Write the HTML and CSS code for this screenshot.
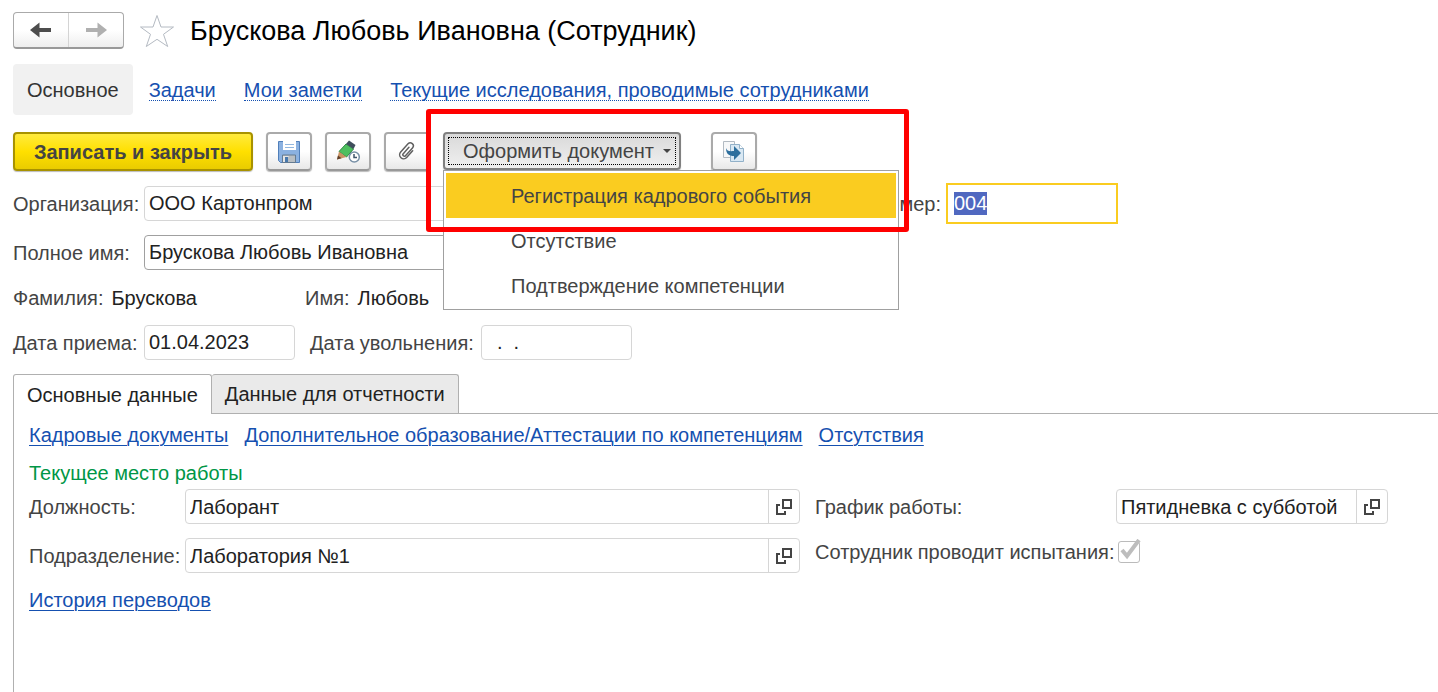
FILE: index.html
```html
<!DOCTYPE html>
<html lang="ru">
<head>
<meta charset="utf-8">
<title>Брускова Любовь Ивановна (Сотрудник)</title>
<link rel="stylesheet" href="styles.css">
</head>
<body>
<svg class="sprite" aria-hidden="true">
  <symbol id="open" viewBox="0 0 16 16"><path d="M7 1h8v8H7z M4 6H1v9h8v-3" fill="none" stroke="#444" stroke-width="2"/></symbol>
</svg>
<main class="page">
  <header class="header">
    <div class="history">
      <button class="history-btn" type="button" aria-label="Назад"><svg width="22" height="16" viewBox="0 0 22 16"><path d="M0 8 9.500 .5V6H21v4H9.500v5.500z" fill="#4d4d4d"/></svg></button>
      <button class="history-btn" type="button" aria-label="Вперед"><svg width="22" height="16" viewBox="0 0 22 16"><path d="M22 8 12.500 .5V6H1v4h11.500v5.500z" fill="#b0b0b0"/></svg></button>
    </div>
    <button class="star" type="button" aria-label="В избранное"><svg width="36" height="34" viewBox="0 0 36 34"><path d="M18 1.500 22 13h12.500l-10 7.300L28.700 32.500 18 25.300 7.300 32.500l4.200-12.200L1.500 13H14z" fill="none" stroke="#b4bac2"/></svg></button>
    <h1 class="title">Брускова Любовь Ивановна (Сотрудник)</h1>
  </header>

  <nav class="nav">
    <a class="nav-current" href="#main">Основное</a>
    <a class="nav-link" href="#tasks">Задачи</a>
    <a class="nav-link" href="#notes">Мои заметки</a>
    <a class="nav-link" href="#research">Текущие исследования, проводимые сотрудниками</a>
  </nav>

  <div class="toolbar">
    <button class="btn btn-primary" type="button">Записать и закрыть</button>
    <button class="btn btn-icon" type="button" aria-label="Записать"><svg width="24" height="24" viewBox="0 0 24 24"><path d="M1.500 1.500h21v21h-19l-2-2z" fill="#8bb1e0" stroke="#507fba"/><path d="M6 1h13v9H6z" fill="#fff"/><path d="M8 4.500h9M8 7.500h9" stroke="#92b7df"/><path d="M5.500 15h13v7.500h-13z" fill="#b8bec3" stroke="#647b91"/><path d="M6 16h6l-4 6H6z" fill="#e5e5e5"/><path d="M8 17h3v5H8z" fill="#4878ac"/></svg></button>
    <button class="btn btn-icon" type="button" aria-label="Отложенная запись"><svg width="24" height="24" viewBox="0 0 24 24"><path d="M10 4l7.500 5-7 8L3 11.500z" fill="#4fbf60" stroke="#2d8c42"/><path d="M13 .5 19.500 5l-2 4L10 4z" fill="#3f4e5c"/><path d="M3 11.500l7.500 5.500L1 19.500z" fill="#c99465"/><path d="M2 15.500 1 19.500l4.500-1.200z" fill="#5f3f2a"/><circle cx="18.300" cy="17" r="5" fill="#fff" stroke="#7890a6" stroke-width="1.500"/><path d="M18 14v3.500h3" fill="none" stroke="#40566b" stroke-width="1.500"/></svg></button>
    <button class="btn btn-icon" type="button" aria-label="Присоединенные файлы"><svg width="22" height="22" viewBox="0 0 22 22"><path d="M15 6v9a4 4 0 0 1-8 0V4a3 3 0 0 1 6 0v10.500a1.200 1.200 0 0 1-3 0V6" transform="rotate(42 11 10)" fill="none" stroke="#606060" stroke-width="1.500" stroke-linecap="round"/></svg></button>
    <div class="dropdown">
      <button class="btn btn-open" type="button" aria-haspopup="menu" aria-expanded="true"><span class="btn-open-text">Оформить документ<span class="caret"></span></span></button>
      <div class="menu" role="menu">
        <button class="menu-item menu-item-active" type="button" role="menuitem">Регистрация кадрового события</button>
        <button class="menu-item" type="button" role="menuitem">Отсутствие</button>
        <button class="menu-item" type="button" role="menuitem">Подтверждение компетенции</button>
      </div>
      <div class="highlight"></div>
    </div>
    <button class="btn btn-icon btn-related" type="button" aria-label="Создать на основании"><svg width="24" height="24" viewBox="0 0 24 24"><path d="M1.500 1.500h11v16h-11z" fill="#f7f8f9" stroke="#b2bac2"/><path d="M8.500 4.500h9l4 4v13h-13z" fill="#d9e8f3" stroke="#91b0c8"/><path d="M17.500 4.500v4h4" fill="#fff" stroke="#91b0c8"/><path d="M4 8c1 3 3 3.500 8 3V6l7 7-7 7v-4c-5 0-8-2-8-8z" fill="#2c6e9d"/></svg></button>
  </div>

  <form class="form">
    <div class="row row-org">
      <label class="label" for="org">Организация:</label>
      <input class="input input-long" id="org" value="ООО Картонпром" readonly>
      <label class="label-number" for="number">Номер:</label>
      <input class="input input-number" id="number" value="004">
    </div>
    <div class="row row-name">
      <label class="label" for="name">Полное имя:</label>
      <input class="input input-long input-dark" id="name" value="Брускова Любовь Ивановна">
    </div>
    <div class="row row-parts">
      <div class="part"><span>Фамилия:</span><span class="value">Брускова</span></div>
      <div class="part"><span>Имя:</span><span class="value">Любовь</span></div>
    </div>
    <div class="row">
      <label class="label" for="hired">Дата приема:</label>
      <input class="input input-date" id="hired" value="01.04.2023">
      <label class="label-fired" for="fired">Дата увольнения:</label>
      <input class="input input-date" id="fired" value="&nbsp; .&nbsp; .">
    </div>
  </form>

  <div class="tabs" role="tablist">
    <button class="tab tab-active" type="button" role="tab" aria-selected="true">Основные данные</button>
    <button class="tab" type="button" role="tab" aria-selected="false">Данные для отчетности</button>
  </div>
  <section class="panel">
    <div class="links">
      <a href="#docs">Кадровые документы</a>
      <a href="#education">Дополнительное образование/Аттестации по компетенциям</a>
      <a href="#absence">Отсутствия</a>
    </div>
    <h2 class="subtitle">Текущее место работы</h2>
    <div class="work">
      <div class="work-main">
        <div class="row">
          <label class="work-label" for="position">Должность:</label>
          <div class="field"><input class="field-input" id="position" value="Лаборант" readonly><button class="field-btn" type="button" aria-label="Открыть должность"><svg width="16" height="16"><use href="#open"/></svg></button></div>
        </div>
        <div class="row">
          <label class="work-label" for="unit">Подразделение:</label>
          <div class="field"><input class="field-input" id="unit" value="Лаборатория №1" readonly><button class="field-btn" type="button" aria-label="Открыть подразделение"><svg width="16" height="16"><use href="#open"/></svg></button></div>
        </div>
      </div>
      <div class="work-side">
        <div class="row">
          <label class="side-label" for="schedule">График работы:</label>
          <div class="field"><input class="field-input" id="schedule" value="Пятидневка с субботой" readonly><button class="field-btn" type="button" aria-label="Открыть график"><svg width="16" height="16"><use href="#open"/></svg></button></div>
        </div>
        <div class="row row-check">
          <label class="side-label" for="tests">Сотрудник проводит испытания:</label>
          <span class="check"><input class="check-input" id="tests" type="checkbox" checked disabled><svg class="check-mark" width="22" height="22" viewBox="0 0 22 22"><path d="m3 11 5 6L20 1" fill="none" stroke="#bdbdbd" stroke-width="4"/></svg></span>
        </div>
      </div>
    </div>
    <a class="transfers" href="#transfers">История переводов</a>
  </section>
</main>
<script src="script.js"></script>
</body>
</html>
```
FILE: styles.css
```css
* { box-sizing: border-box; }
body {
  margin: 0;
  background: #fff;
  color: #444;
  font: 20px/24px "Liberation Sans", Arial, sans-serif;
}
button, input { font: inherit; color: inherit; }
button { padding: 0; border: 0; background: none; }
a { color: #1550b0; }
.sprite { position: absolute; width: 0; height: 0; }
.page {
  display: flex;
  flex-direction: column;
  min-height: 100vh;
  padding: 12px 0 0 13px;
}

.header { display: flex; align-items: center; }
.history {
  display: flex;
  height: 37px;
  border: 1px solid #aaa;
  border-bottom: 2px solid #999;
  border-radius: 4px;
  background: linear-gradient(#fff 50%, #eee);
}
.history-btn {
  display: flex;
  align-items: center;
  justify-content: center;
  width: 54px;
}
.history-btn + .history-btn { width: 55px; border-left: 1px solid #d4d4d4; }
.star { display: flex; margin: 0 15px; }
.title { margin: 0; color: #000; font-size: 27px; font-weight: 400; line-height: 36px; }

.nav { display: flex; align-items: center; gap: 28px; margin-top: 15px; }
.nav-current {
  margin-right: -12px;
  padding: 14px 14px 13px;
  border-radius: 4px;
  background: #f1f1f1;
  color: #333;
  text-decoration: none;
}
.nav-link {
  margin-top: 1px;
  border-bottom: 1px dotted #1550b0;
  line-height: 20px;
  text-decoration: none;
}

.toolbar { display: flex; height: 39px; margin-top: 17px; }
.btn {
  display: flex;
  align-items: center;
  justify-content: center;
  border: 2px solid #aaa;
  border-bottom-color: #999;
  border-radius: 4px;
  background: linear-gradient(#fff 50%, #e8e8e8);
  box-shadow: 0 1px 1px #bbb;
}
.btn-primary {
  width: 240px;
  border-color: #a89200;
  background: linear-gradient(#ffea3d, #ffe000 50%, #e9cc00);
  font-weight: 700;
}
.btn-icon { width: 46px; margin-left: 13px; }
.dropdown { position: relative; margin-left: 13px; }
.btn-open {
  width: 238px;
  height: 38px;
  padding: 3px;
  border-color: #808080;
  background: linear-gradient(#d9d9d9, #f0f0f0);
}
.btn-open-text {
  display: flex;
  flex: 1;
  align-items: center;
  justify-content: flex-end;
  gap: 9px;
  height: 28px;
  padding-right: 4px;
  border: 1px dotted #000;
}
.caret { border: 4px solid transparent; border-top-color: #444; border-bottom: 0; }
.menu {
  position: absolute;
  z-index: 1;
  top: 38px;
  left: 0;
  width: 456px;
  padding: 2px 2px 1px;
  border: 1px solid #a0a0a0;
  background: #fff;
}
.menu-item {
  display: block;
  width: 100%;
  height: 45px;
  padding: 0 65px;
  text-align: left;
}
.menu-item-active { background: #facc20; }
.highlight {
  position: absolute;
  z-index: 2;
  top: -23px;
  left: -17px;
  width: 483px;
  height: 123px;
  border: 5px solid #f00;
  border-radius: 3px;
  pointer-events: none;
}
.btn-related { margin-left: 30px; }

.form { margin-top: 12px; }
.row { display: flex; align-items: center; }
.label { width: 131px; white-space: nowrap; }
.input {
  min-width: 0;
  height: 35px;
  padding: 0 4px;
  border: 1px solid #d6d6d6;
  border-radius: 4px;
  background: #fff;
  color: #222;
  outline: 0;
}
.input-long { width: 700px; }
.input-dark { border-color: #a0a0a0; }
.label-number { width: 102px; padding-right: 5px; text-align: right; }
.input-number {
  width: 172px;
  height: 41px;
  padding: 0 6px;
  border: 2px solid #facc20;
  border-radius: 0;
}
.input-number::selection { background: #5068c0; color: #fff; }
.row-name { margin-top: 11px; }
.row-parts { height: 55px; }
.part { display: flex; gap: 8px; width: 292px; }
.value { color: #222; }
.input-date { width: 151px; }
.label-fired { padding: 0 7px 0 15px; }

.tabs { display: flex; margin-top: 14px; }
.tab {
  height: 39px;
  padding: 0 13px;
  border: 1px solid #b0b0b0;
  border-bottom: 0;
  border-radius: 3px 3px 0 0;
  background: #eaeaea;
  color: #222;
}
.tab + .tab { border-left: 0; }
.tab-active { position: relative; height: 40px; margin-bottom: -1px; background: #fff; }
.panel {
  flex: 1;
  padding: 9px 50px 0 15px;
  border: solid #b0b0b0;
  border-width: 1px 0 0 1px;
}
.links { display: flex; gap: 16px; }
.links a, .transfers { text-underline-offset: 3px; text-decoration-thickness: 1px; }
.subtitle { margin: 14px 0 4px; color: #009646; font-size: 20px; font-weight: 400; }
.work { display: flex; gap: 15px; }
.work-main { display: grid; flex: 1; gap: 14px; }
.work-label { width: 156px; }
.field {
  display: flex;
  flex: 1;
  min-width: 0;
  height: 35px;
  border: 1px solid #d6d6d6;
  border-radius: 4px;
}
.field-input {
  flex: 1;
  min-width: 0;
  padding: 0 4px;
  border: 0;
  background: none;
  color: #222;
  outline: 0;
}
.field-btn {
  display: flex;
  align-items: center;
  justify-content: center;
  width: 31px;
  border-left: 1px solid #d6d6d6;
}
.work-side { width: 573px; }
.side-label { flex: none; width: 301px; white-space: nowrap; }
.row-check { margin-top: 16px; }
.check { position: relative; display: flex; margin-left: 2px; }
.check-input {
  width: 22px;
  height: 22px;
  margin: 0;
  border: 1px solid #bbb;
  border-radius: 3px;
  appearance: none;
}
.check-mark { position: absolute; top: -2px; left: 1px; }
.transfers { display: inline-block; margin-top: 15px; }
```
FILE: script.js
```js
document.getElementById("number").select();
```
